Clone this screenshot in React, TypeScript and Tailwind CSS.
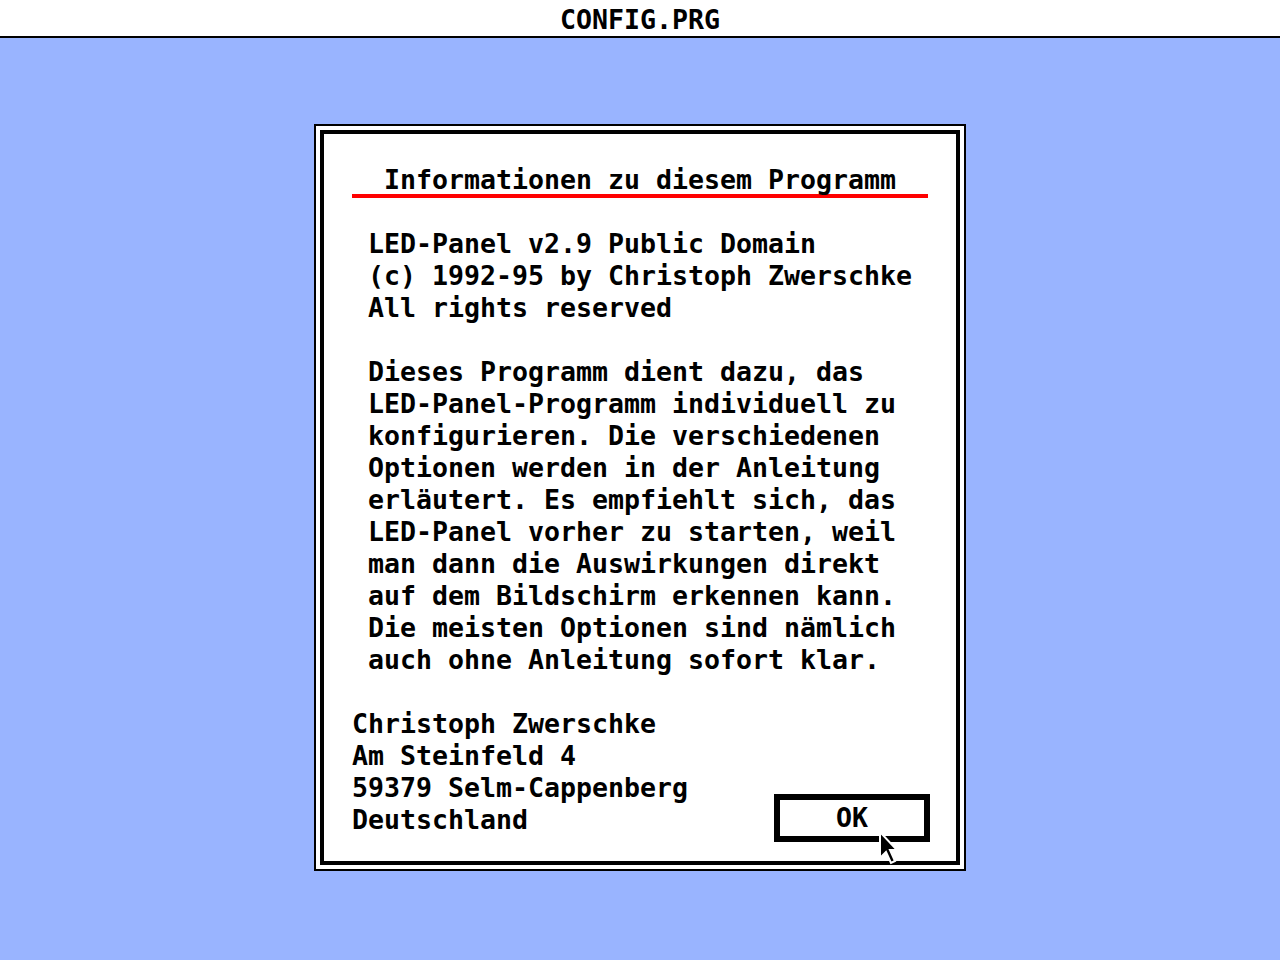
import React from 'react'

const mono = { fontFamily: '"DejaVu Sans Mono", "Liberation Mono", monospace' }

const infoLines = [
    "LED-Panel v2.9 Public Domain",
    "(c) 1992-95 by Christoph Zwerschke",
    "All rights reserved",
]

const bodyLines = [
    "Dieses Programm dient dazu, das",
    "LED-Panel-Programm individuell zu",
    "konfigurieren. Die verschiedenen",
    "Optionen werden in der Anleitung",
    "erläutert. Es empfiehlt sich, das",
    "LED-Panel vorher zu starten, weil",
    "man dann die Auswirkungen direkt",
    "auf dem Bildschirm erkennen kann.",
    "Die meisten Optionen sind nämlich",
    "auch ohne Anleitung sofort klar.",
]

const address = ["Christoph Zwerschke", "Am Steinfeld 4", "59379 Selm-Cappenberg", "Deutschland"]

const MouseArrow = () => (
    <svg width="20" height="34" viewBox="0 0 20 34" className="absolute left-[879px] top-[831px]">
        <polygon
            points="1,1 1,27 7,21 12,32 16,30 11,19 18,19"
            fill="#000"
            stroke="#fff"
            strokeWidth="2"
            strokeLinejoin="miter"
        />
    </svg>
)

export default function App() {
    return (
        <div className="relative w-full min-h-[960px] bg-[#99b4ff] text-black font-bold text-[26.58px] leading-[32px] whitespace-pre" style={mono}>
            {/* menu / title bar */}
            <div className="h-[38px] pt-[3px] bg-white border-b-2 border-black flex items-center justify-center">
                CONFIG.PRG
            </div>

            <div className="flex justify-center pt-[86px]">
                <div className="w-[652px] h-[747px] border-2 border-black bg-white p-[4px]">
                    <div className="h-full border-4 border-black pl-[28px] pr-[26px] pt-[30px]">
                        <div className="w-[576px] h-[30px] text-center">Informationen zu diesem Programm</div>
                        <div className="w-[576px] h-[4px] bg-[#ff0000]" />

                        <div className="pl-[16px] pt-[30px]">
                            {infoLines.map((l) => (
                                <div key={l} className="h-[32px]">{l}</div>
                            ))}
                            <div className="h-[32px]" />
                            {bodyLines.map((l) => (
                                <div key={l} className="h-[32px]">{l}</div>
                            ))}
                            <div className="h-[32px]" />
                        </div>

                        <div className="flex justify-between">
                            <div>
                                {address.map((l) => (
                                    <div key={l} className="h-[32px]">{l}</div>
                                ))}
                            </div>
                            <button className="mt-[86px] w-[156px] h-[48px] border-[6px] border-black bg-white flex items-center justify-center">
                                OK
                            </button>
                        </div>
                    </div>
                </div>
            </div>

            <MouseArrow />
        </div>
    )
}
